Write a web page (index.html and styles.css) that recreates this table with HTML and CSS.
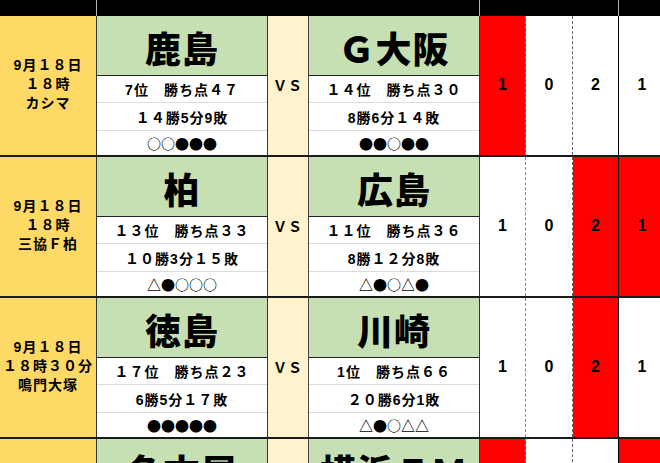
FILE: index.html
```html
<!DOCTYPE html>
<html lang="ja">
<head>
<meta charset="utf-8">
<title>J1 予想</title>
<link rel="stylesheet" href="styles.css">
</head>
<body>
<div class="sheet">
  <div class="hdr">
    <div class="h h-date"></div>
    <div class="h h-match"></div>
    <div class="h h-score"></div>
    <div class="h h-rest"></div>
  </div>

  <div class="match">
    <div class="date"><span>9月１８日</span><span>１８時</span><span>カシマ</span></div>
    <div class="team"><div class="tname">鹿島</div><div class="line">7位　勝ち点４７</div><div class="line">１４勝5分9敗</div><div class="line form">○○●●●</div></div>
    <div class="vs">ＶＳ</div>
    <div class="team"><div class="tname">Ｇ大阪</div><div class="line">１４位　勝ち点３０</div><div class="line">8勝6分１４敗</div><div class="line form">●●○●●</div></div>
    <div class="sc s1 red">1</div>
    <div class="sc s2">0</div>
    <div class="sc s3">2</div>
    <div class="sc s4">1</div>
  </div>

  <div class="match">
    <div class="date"><span>9月１８日</span><span>１８時</span><span>三協Ｆ柏</span></div>
    <div class="team"><div class="tname">柏</div><div class="line">１３位　勝ち点３３</div><div class="line">１０勝3分１５敗</div><div class="line form">△●○○○</div></div>
    <div class="vs">ＶＳ</div>
    <div class="team"><div class="tname">広島</div><div class="line">１１位　勝ち点３６</div><div class="line">8勝１２分8敗</div><div class="line form">△●○△●</div></div>
    <div class="sc s1">1</div>
    <div class="sc s2">0</div>
    <div class="sc s3 red">2</div>
    <div class="sc s4 red">1</div>
  </div>

  <div class="match">
    <div class="date"><span>9月１８日</span><span>１８時３０分</span><span>鳴門大塚</span></div>
    <div class="team"><div class="tname">徳島</div><div class="line">１７位　勝ち点２３</div><div class="line">6勝5分１７敗</div><div class="line form">●●●●●</div></div>
    <div class="vs">ＶＳ</div>
    <div class="team"><div class="tname">川崎</div><div class="line">1位　勝ち点６６</div><div class="line">２０勝6分1敗</div><div class="line form">△●○△△</div></div>
    <div class="sc s1">1</div>
    <div class="sc s2">0</div>
    <div class="sc s3 red">2</div>
    <div class="sc s4">1</div>
  </div>

  <div class="match">
    <div class="date"></div>
    <div class="team"><div class="tname">名古屋</div></div>
    <div class="vs"></div>
    <div class="team"><div class="tname">横浜ＦＭ</div></div>
    <div class="sc s1 red"></div>
    <div class="sc s2"></div>
    <div class="sc s3"></div>
    <div class="sc s4 red"></div>
  </div>
</div>
</body>
</html>
```

FILE: styles.css
```css
* { box-sizing: border-box; }
html, body { margin: 0; padding: 0; }
body {
  width: 660px;
  height: 463px;
  overflow: hidden;
  background: #fff;
  font-family: "Liberation Sans", "Noto Sans CJK JP", sans-serif;
  font-weight: 700;
  color: #000;
}
.sheet { width: 665px; }

.hdr {
  display: grid;
  grid-template-columns: 97px 383px 139px 46px;
  height: 16px;
  background: #000;
}
.h { border-right: 1px solid #b5b5b5; }
.h-rest { border-right: none; }

.match {
  display: grid;
  grid-template-columns: 97px 171px 41px 171px 46px 47px 46px 46px;
  height: 141px;
  border-bottom: 2px solid #1a1a1a;
}

.date {
  background: #ffd966;
  border-right: 1px solid #333;
  display: flex;
  flex-direction: column;
  align-items: center;
  justify-content: center;
  font-size: 14px;
  line-height: 19px;
  letter-spacing: 1px;
  padding-bottom: 2px;
}

.team {
  display: flex;
  flex-direction: column;
  border-right: 1px solid #333;
}
.tname {
  height: 60px;
  flex: none;
  background: #c6e0b4;
  border-bottom: 1px solid #222;
  display: flex;
  align-items: center;
  justify-content: center;
  font-family: "Noto Sans CJK JP", sans-serif;
  font-size: 36px;
  font-weight: 900;
  letter-spacing: 1px;
  padding-top: 2px;
}
.line {
  display: flex;
  align-items: center;
  justify-content: center;
  font-size: 14px;
  letter-spacing: 1px;
  border-bottom: 1px solid #dcdcdc;
}
.line:nth-child(2) { height: 27px; }
.line:nth-child(3) { height: 28px; }
.line:nth-child(4) { flex: 1; border-bottom: none; }
.form {
  font-family: "Noto Sans CJK JP", sans-serif;
  font-size: 14px;
  letter-spacing: 0;
}

.vs {
  background: #fff2cc;
  border-right: 1px solid #444;
  display: flex;
  align-items: center;
  justify-content: center;
  font-size: 14px;
  letter-spacing: 1px;
  padding-bottom: 2px;
}

.sc {
  display: flex;
  align-items: center;
  justify-content: center;
  font-size: 16px;
  padding-bottom: 2px;
}
.s1 { border-right: 1px dashed #888; }
.s2 { border-right: 1px dashed #666; }
.s3 { border-right: 1px solid #000; }
.red { background: #ff0000; }
```
